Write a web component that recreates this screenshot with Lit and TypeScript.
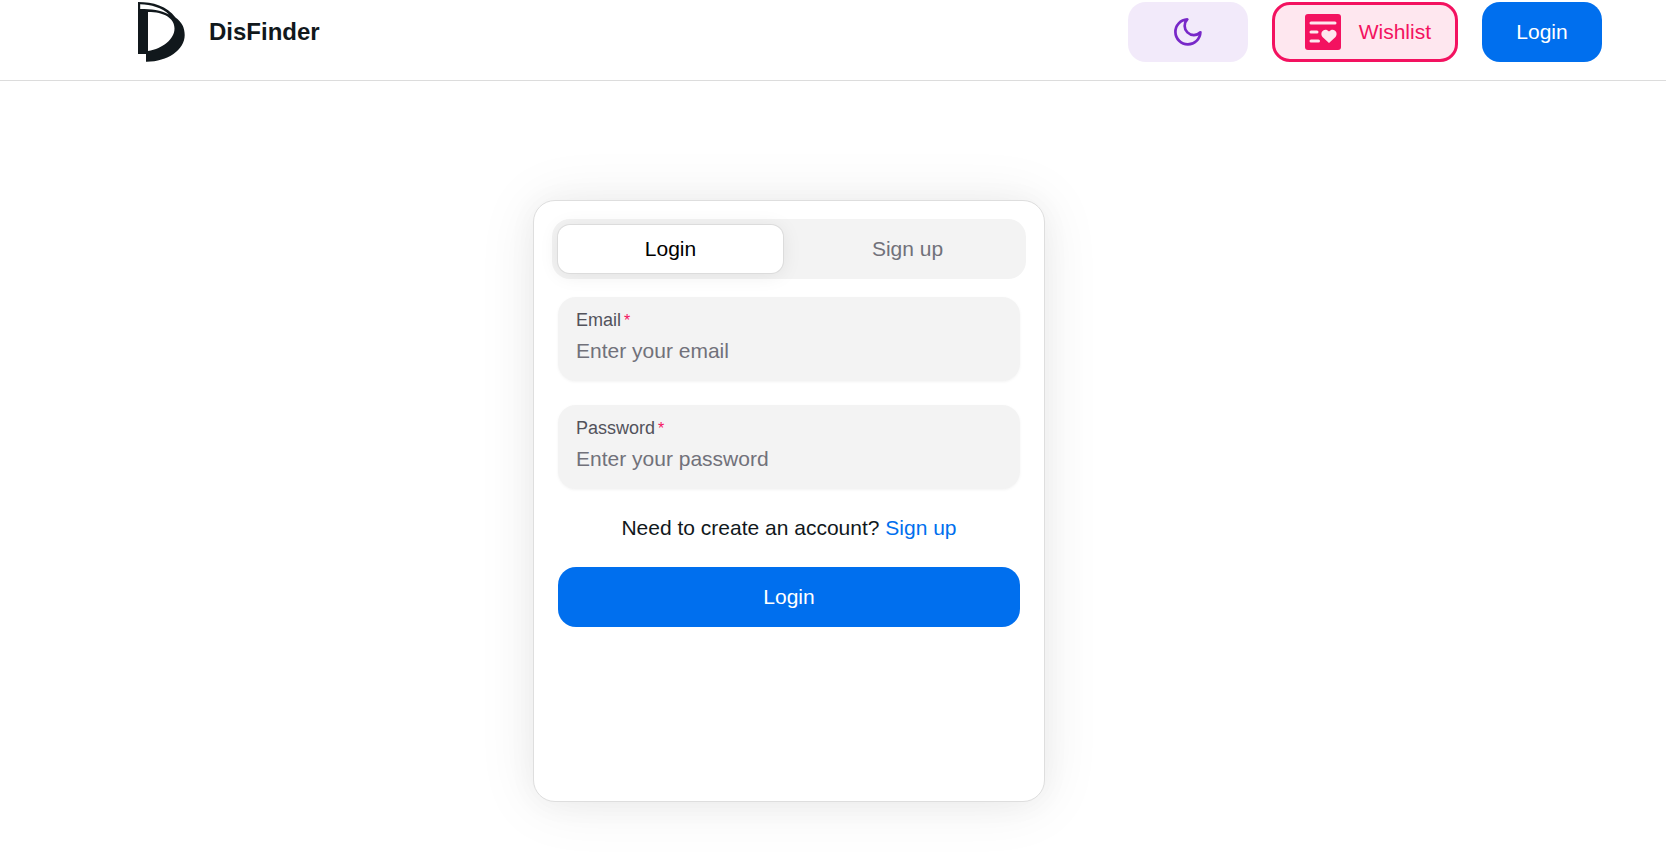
import { LitElement, html, css } from "lit";
import { customElement, state } from "lit/decorators.js";

type Mode = "login" | "signup";

@customElement("site-header")
class SiteHeader extends LitElement {
  static styles = css`
    :host {
      display: block;
      border-bottom: 1px solid #dcdcdc;
    }
    .bar {
      display: flex;
      align-items: center;
      justify-content: space-between;
      padding: 2px 64px 18px 138px;
    }
    .brand {
      display: flex;
      align-items: center;
      gap: 23px;
      color: #11181c;
      font-size: 24px;
      line-height: 36px;
      font-weight: 700;
      text-decoration: none;
    }
    .logo {
      width: 48px;
      height: 60px;
      display: block;
    }
    .actions {
      display: flex;
      gap: 24px;
    }
    button {
      box-sizing: border-box;
      display: flex;
      align-items: center;
      justify-content: center;
      gap: 18px;
      height: 60px;
      min-width: 120px;
      padding: 0 24px;
      border: 0;
      border-radius: 18px;
      font: inherit;
      cursor: pointer;
    }
    .theme {
      background: #f2eafa;
      color: #7828c8;
    }
    .wishlist {
      background: #fee7ef;
      color: #f31260;
      border: 3px solid #f31260;
      padding-left: 30px;
    }
    .login {
      background: #006fee;
      color: #fff;
    }
    .icon {
      width: 36px;
      height: 36px;
    }
  `;

  render() {
    return html`
      <header class="bar">
        <a class="brand" href="#">
          <svg class="logo" viewBox="0 0 48 60" aria-hidden="true">
            <path fill="#11181c" fill-rule="evenodd" d="M0 0C15 0 29 4 37.500 15.500C44 20 46.700 26 46.700 33C46.700 48 29 60 8 59.700V52H0ZM2.200 2.200V7C13 7 23 8 31 12.500C24 5.500 13 2.500 2.200 2.200ZM10 10V49C25 46.500 36.500 37 36.500 26.500C36.500 16 26 10 10 10Z" />
          </svg>
          <span>DisFinder</span>
        </a>
        <nav class="actions">
          <button class="theme" type="button" aria-label="Toggle dark mode">
            <svg class="icon" viewBox="0 0 36 36" fill="none" stroke="currentColor" stroke-width="2.700" stroke-linejoin="round" aria-hidden="true">
              <path d="M17.300 5.400A12.500 12.500 0 1 0 30.400 18.300A9.100 9.100 0 0 1 17.300 5.400Z" />
            </svg>
          </button>
          <button class="wishlist" type="button">
            <svg class="icon" viewBox="0 0 36 36" aria-hidden="true">
              <rect width="36" height="36" rx="3" fill="#f31260" />
              <path d="M6 9H30M6 18H12M6 27H13.500" stroke="#fee7ef" stroke-width="3" stroke-linecap="round" />
              <path d="M24 29L17.500 23C14 18.500 19.500 13 24 17.500C28.500 13 34 18.500 30.500 23Z" fill="#fee7ef" />
            </svg>
            <span>Wishlist</span>
          </button>
          <button class="login" type="button">Login</button>
        </nav>
      </header>
    `;
  }
}

@customElement("auth-card")
class AuthCard extends LitElement {
  @state() private mode: Mode = "login";

  static styles = css`
    :host {
      box-sizing: border-box;
      display: block;
      width: 100%;
      max-width: 512px;
      min-height: 602px;
      padding: 18px;
      border: 1px solid #dedede;
      border-radius: 22px;
      background: #fff;
      box-shadow: 0 2px 60px rgba(0, 0, 0, 0.08), 0 2px 30px rgba(0, 0, 0, 0.04);
    }
    button,
    input {
      font: inherit;
    }
    button {
      border: 0;
      cursor: pointer;
    }
    .tabs {
      display: grid;
      grid-template-columns: 1fr 1fr;
      gap: 12px;
      padding: 6px;
      border-radius: 18px;
      background: #f3f3f3;
    }
    .tab {
      height: 48px;
      border-radius: 12px;
      background: transparent;
      color: #71717a;
    }
    .tab.active {
      background: #fff;
      color: #000;
      box-shadow: 0 0 0 1px #dcdcdc, 0 2px 20px rgba(0, 0, 0, 0.08);
    }
    .form {
      display: flex;
      flex-direction: column;
      gap: 24px;
      padding: 18px 6px;
    }
    .field {
      box-sizing: border-box;
      display: flex;
      flex-direction: column;
      height: 84px;
      padding: 12px 18px;
      border-radius: 18px;
      background: #f3f3f3;
      box-shadow: 0 1px 3px rgba(0, 0, 0, 0.05);
    }
    .label {
      font-size: 18px;
      line-height: 22px;
      color: #52525b;
    }
    .star {
      margin-left: 3px;
      font-size: 16px;
      color: #f31260;
    }
    .input {
      width: 100%;
      height: 42px;
      padding: 0;
      border: 0;
      outline: 0;
      background: transparent;
      color: #11181c;
    }
    .input::placeholder {
      color: #71717a;
      opacity: 1;
    }
    .prompt {
      margin: 0;
      line-height: 30px;
      text-align: center;
      color: #11181c;
    }
    .link {
      color: #006fee;
      text-decoration: none;
    }
    .submit {
      height: 60px;
      border-radius: 18px;
      background: #006fee;
      color: #fff;
    }
  `;

  private tab(mode: Mode, text: string) {
    const active = this.mode === mode;
    return html`<button
      class="tab ${active ? "active" : ""}"
      type="button"
      role="tab"
      aria-selected=${active}
      @click=${() => (this.mode = mode)}
    >${text}</button>`;
  }

  private field(id: string, type: string, label: string, placeholder: string) {
    return html`<div class="field">
      <label class="label" for=${id}>${label}<span class="star">*</span></label>
      <input class="input" id=${id} type=${type} placeholder=${placeholder} required />
    </div>`;
  }

  private swap(e: Event) {
    e.preventDefault();
    this.mode = this.mode === "login" ? "signup" : "login";
  }

  render() {
    const login = this.mode === "login";
    return html`
      <div class="tabs" role="tablist">
        ${this.tab("login", "Login")}${this.tab("signup", "Sign up")}
      </div>
      <form class="form" @submit=${(e: Event) => e.preventDefault()}>
        ${this.field("email", "email", "Email", "Enter your email")}
        ${this.field("password", "password", "Password", "Enter your password")}
        <p class="prompt">
          ${login ? "Need to create an account?" : "Already have an account?"}
          <a class="link" href="#" @click=${this.swap}>${login ? "Sign up" : "Login"}</a>
        </p>
        <button class="submit" type="submit">${login ? "Login" : "Sign up"}</button>
      </form>
    `;
  }
}

@customElement("app-root")
class AppRoot extends LitElement {
  static styles = css`
    :host {
      display: block;
      min-height: 100vh;
      background: #fff;
      font-family: "Liberation Sans", Arial, sans-serif;
      font-size: 21px;
      line-height: 30px;
    }
    .main {
      display: flex;
      justify-content: center;
      padding: 119px 88px 60px 0;
    }
  `;

  render() {
    return html`
      <site-header></site-header>
      <main class="main"><auth-card></auth-card></main>
    `;
  }
}
